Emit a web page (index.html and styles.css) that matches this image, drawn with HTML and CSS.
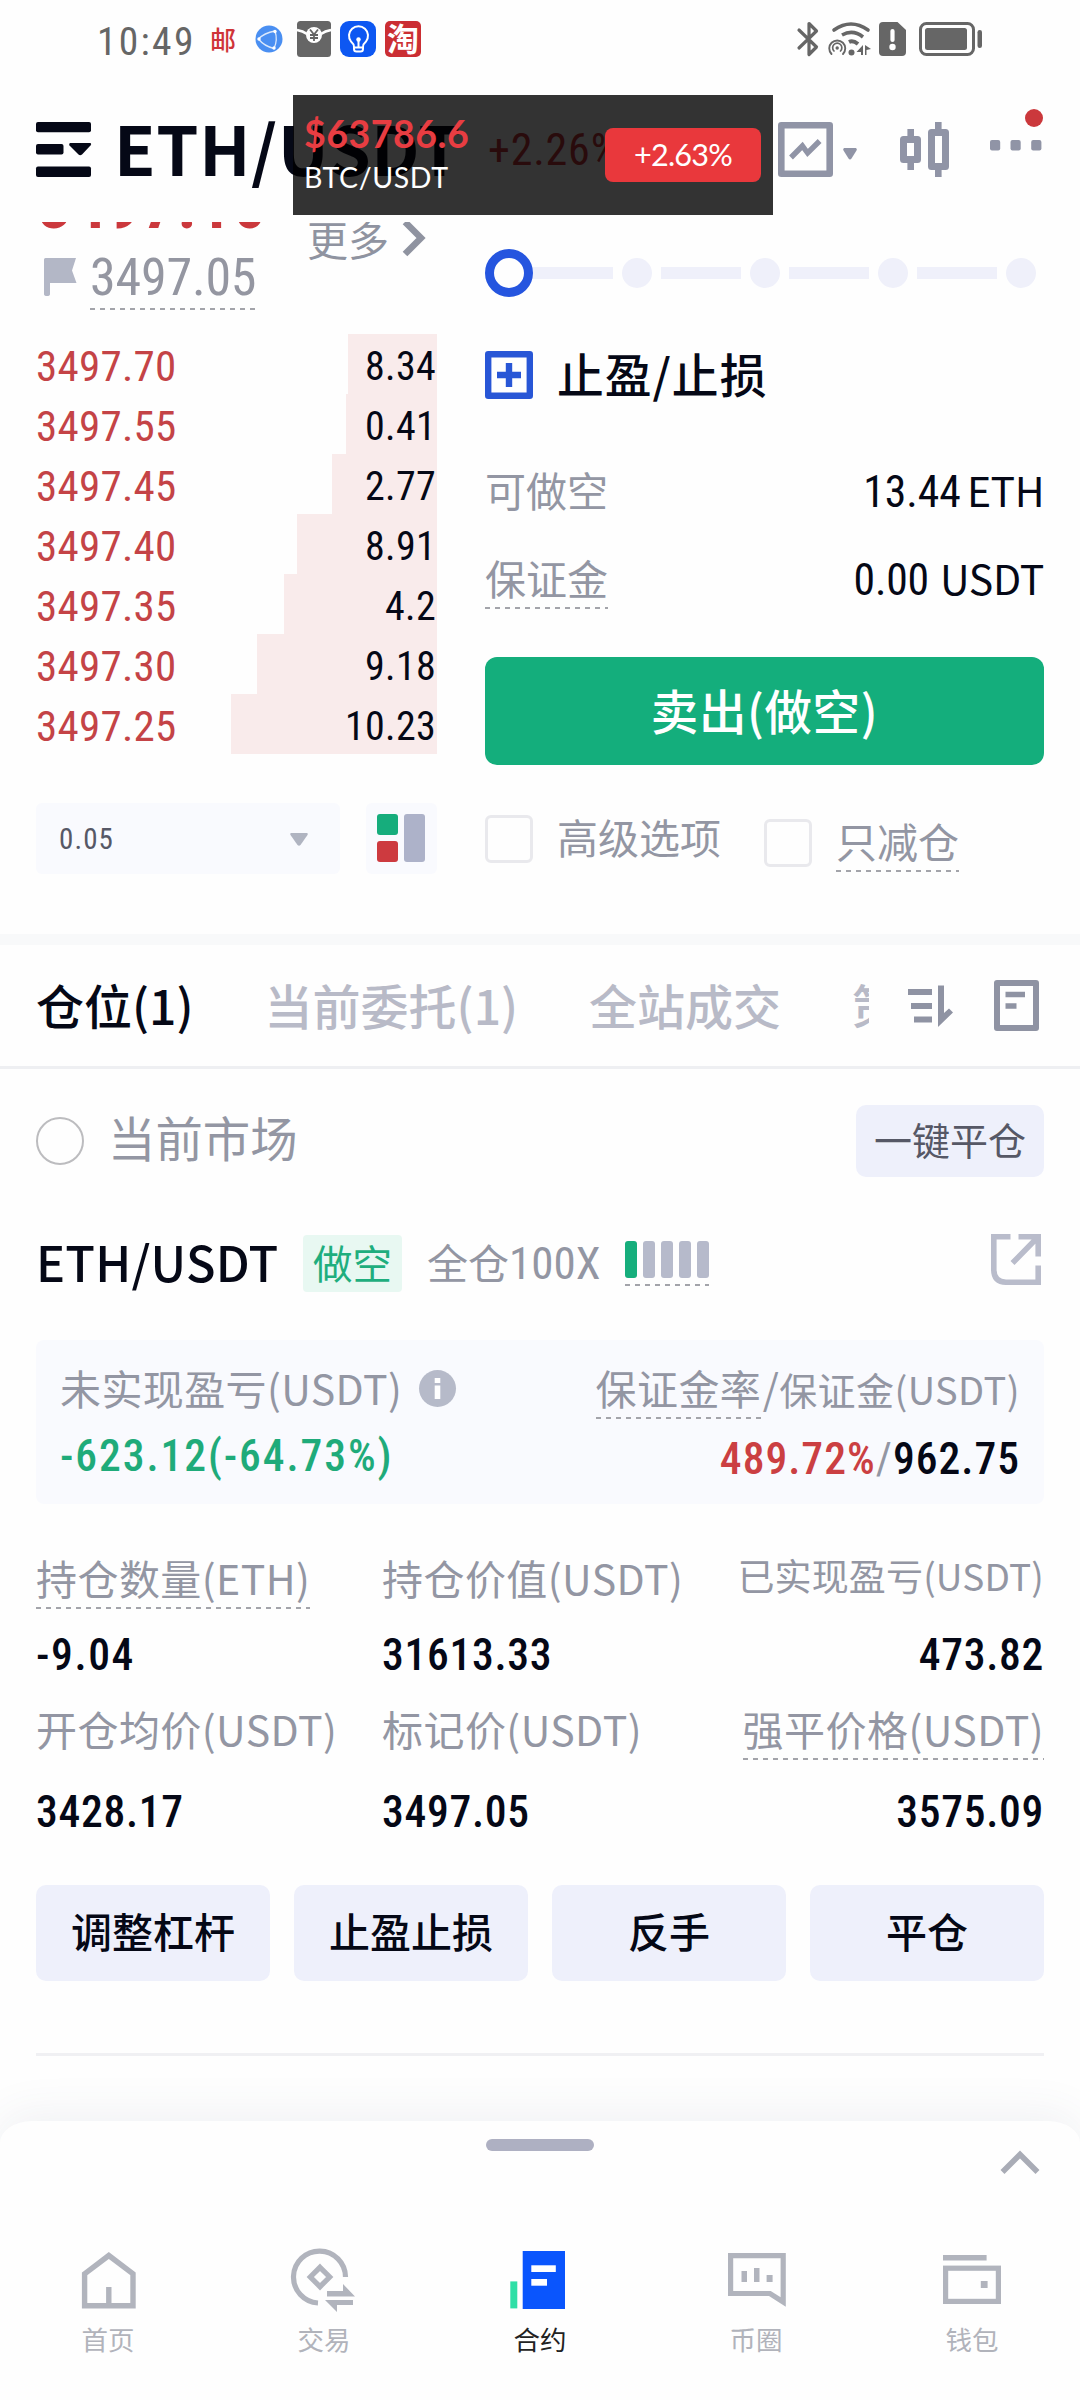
FILE: index.html
```
<!DOCTYPE html>
<html lang="zh-CN">
<head>
<meta charset="utf-8">
<title>ETH/USDT 合约</title>
<link rel="stylesheet" href="styles.css">
</head>
<body>
<div class="status">
  <span class="clock num">10:49</span>
  <span class="mail">邮</span>
  <svg class="globe" width="28" height="28" viewBox="0 0 28 28"><circle cx="14" cy="14" r="13.5" fill="#4a8ff2"/><g stroke="#fff" stroke-width="1.3" fill="none" opacity=".8"><path d="M20 6Q9 8 3.500 14Q9 21 19 23.500Q23 15 20 6"/></g><circle cx="4" cy="14" r="1.7" fill="#fff"/><circle cx="20" cy="6.500" r="1.7" fill="#fff"/><circle cx="19" cy="23" r="1.7" fill="#fff"/></svg>
  <svg class="envelope" width="34" height="36" viewBox="0 0 34 36"><rect width="34" height="36" rx="3.5" fill="#666"/><path d="M0 9Q6 10 10 13M34 9Q28 10 24 13" stroke="#fff" stroke-width="2.6" fill="none"/><circle cx="17" cy="14" r="8" fill="#fff"/><path d="M13 8.500L17 13.500L21 8.500M17 13.500V20M13 14H21M13 17H21" stroke="#666" stroke-width="1.8" fill="none"/></svg>
  <svg class="bulb" width="36" height="36" viewBox="0 0 36 36"><rect width="36" height="36" rx="9" fill="#0d57f2"/><path d="M14 26Q14 23 11 20.500A9.500 9.500 0 1 1 26 20.500Q23 23 23 26V28Q23 30.500 20.500 30.500H16.500Q14 30.500 14 28ZM14 26.500H23M18.500 26V19" fill="none" stroke="#fff" stroke-width="2"/><circle cx="18.500" cy="18.500" r="2.200" fill="#fff"/></svg>
  <span class="tao">淘</span>
  <span class="spacer"></span>
  <svg class="bluetooth" width="22" height="36" viewBox="0 0 22 36"><path d="M2 9L19.500 26L12 33.500V2.500L19.500 10L2 27" fill="none" stroke="#666" stroke-width="3.200" stroke-linejoin="round" stroke-linecap="round"/></svg>
  <svg class="wifi" width="43" height="34" viewBox="0 0 43 34"><g fill="none" stroke="#666" stroke-linecap="round"><path d="M6 8Q23-4 40 8" stroke-width="3.600"/><path d="M14 13Q25 7 35 15" stroke-width="3.600" stroke-linecap="butt"/><path d="M21 20Q25 18 30 22" stroke-width="4" stroke-linecap="butt"/><path d="M3.500 32A8 8 0 1 1 15 32" stroke-width="1.900"/><path d="M6 29A4.600 4.600 0 1 1 12.500 29" stroke-width="1.700"/></g><g fill="#666"><circle cx="9.200" cy="26" r="1.700"/><circle cx="23.500" cy="30.500" r="3"/><path d="M35 23V33H33V30H28.500ZM37 33V23L43 27L38.500 28V33Z"/></g></svg>
  <svg class="sim" width="27" height="34" viewBox="0 0 27 34"><path d="M4 0H18.500L27 8V30Q27 34 23 34H4Q0 34 0 30V4Q0 0 4 0Z" fill="#666"/><path d="M13.500 9V18" stroke="#fff" stroke-width="4.200" stroke-linecap="round"/><circle cx="13.500" cy="25" r="3.200" fill="#fff"/></svg>
  <svg class="battery" width="64" height="34" viewBox="0 0 64 34"><rect x="1.500" y="1.500" width="53" height="31" rx="6" fill="none" stroke="#666" stroke-width="3"/><rect x="6" y="6" width="42" height="22" rx="2.500" fill="#666"/><rect x="58.500" y="8" width="4.500" height="18" rx="2.200" fill="#666"/></svg>
</div>

<header class="header">
  <svg width="55" height="55" viewBox="0 0 55 55" fill="#050816"><rect width="55" height="10.300" rx="2"/><rect y="22" width="27.500" height="10.500" rx="2"/><rect y="44.500" width="55" height="10.500" rx="2"/><path d="M34 21H54Q56 21.500 54.500 23.500L46 32.500Q44 34 42.500 32.500L33.500 23.500Q32.500 21.500 34 21Z"/></svg>
  <h1 class="pair">ETH/USDT</h1>
  <span class="change num">+2.26%</span>
  <span class="spacer"></span>
  <svg width="55" height="55" viewBox="0 0 55 55"><rect x="3.300" y="3.300" width="48.400" height="48.400" fill="none" stroke="#9094a6" stroke-width="6.600" stroke-linejoin="round"/><path d="M13 35.500L24.400 24L29.600 31L41.600 19" fill="none" stroke="#9094a6" stroke-width="5.400"/></svg>
  <svg class="caret" width="14" height="12" viewBox="0 0 14 12"><path d="M1 0H13Q14.500 1 13.500 2.500L8.500 10.500Q7 12.500 5.500 10.500L.5 2.500Q-.5 1 1 0Z" fill="#9094a6"/></svg>
  <svg class="candles" width="49" height="55" viewBox="0 0 49 55"><g fill="none" stroke="#9094a6" stroke-width="7" stroke-linejoin="round"><rect x="3.500" y="17.500" width="14" height="20"/><path d="M10.700 7V16M10.700 38V48M38.300 0V9M38.300 46V55" stroke-width="6.600"/><rect x="31.500" y="10.500" width="14" height="34"/></g></svg>
  <svg class="more" width="52" height="55" viewBox="0 0 52 55"><g fill="#9094a6"><rect y="18" width="10.200" height="10.400" rx="2"/><rect x="20.500" y="18" width="10.200" height="10.400" rx="2"/><rect x="41.200" y="18" width="10.200" height="10.400" rx="2"/></g><circle cx="44" cy="-4" r="9" fill="#cb383c"/></svg>
</header>

<aside class="ticker">
  <div class="ticker-text"><b class="ticker-price">$63786.6</b><span class="ticker-pair">BTC/USDT</span></div>
  <span class="ticker-badge">+2.63%</span>
</aside>

<section class="trade">
  <div class="book">
    <div class="book-top">
      <div>
        <div class="last num">3497.10</div>
        <div class="mark"><svg width="33" height="38" viewBox="0 0 33 38"><path d="M0 1.500Q0 0 1.500 0H32L28 12.500L32.500 25H6V36Q6 38 3 38Q0 38 0 36Z" fill="#b3b7c6"/></svg><span class="mark-price num dash">3497.05</span></div>
      </div>
      <div class="book-more">更多<svg width="24" height="34" viewBox="0 0 24 34"><path d="M3 1L19 17L3 33" fill="none" stroke="#8f93a0" stroke-width="6.500"/></svg></div>
    </div>
    <div class="asks num">
      <div class="ask" style="--depth:89px"><span>3497.70</span><span class="amount">8.34</span></div>
      <div class="ask" style="--depth:91px"><span>3497.55</span><span class="amount">0.41</span></div>
      <div class="ask" style="--depth:105px"><span>3497.45</span><span class="amount">2.77</span></div>
      <div class="ask" style="--depth:140px"><span>3497.40</span><span class="amount">8.91</span></div>
      <div class="ask" style="--depth:153px"><span>3497.35</span><span class="amount">4.2</span></div>
      <div class="ask" style="--depth:180px"><span>3497.30</span><span class="amount">9.18</span></div>
      <div class="ask" style="--depth:206px"><span>3497.25</span><span class="amount">10.23</span></div>
    </div>
    <div class="book-tools">
      <div class="step num">0.05<svg width="18" height="13" viewBox="0 0 18 13"><path d="M1 0H17Q18.500 .5 17.500 2L10.500 12Q9 13.500 7.500 12L.5 2Q-.5 .5 1 0Z" fill="#b0b4c1"/></svg></div>
      <div class="layout-btn"><svg width="48" height="48" viewBox="0 0 48 48"><rect width="21" height="21" rx="3" fill="#16ad7c"/><rect y="27" width="21" height="21" rx="3" fill="#cd3a3f"/><rect x="27" width="21" height="48" rx="3" fill="#adb2c9"/></svg></div>
    </div>
  </div>

  <div class="order">
    <div class="slider"><i class="knob"></i><i class="bar"></i><i class="dot"></i><i class="bar"></i><i class="dot"></i><i class="bar"></i><i class="dot"></i><i class="bar"></i><i class="dot"></i></div>
    <div class="tpsl"><svg width="48" height="48" viewBox="0 0 48 48"><path d="M3.200 3.200H44.800V44.800H3.200ZM12 24H36M24 12V36" fill="none" stroke="#2856d6" stroke-width="6.400" stroke-linejoin="round"/></svg>止盈/止损</div>
    <div class="kv"><span>可做空</span><span class="kv-value"><span class="num near">13.44</span><span class="eth">ETH</span></span></div>
    <div class="kv kv-2"><span class="dash">保证金</span><span class="kv-value"><span class="num zero">0.00</span><span class="usdt">USDT</span></span></div>
    <div class="sell">卖出(做空)</div>
    <div class="checks">
      <label class="check"><i class="box"></i><span>高级选项</span></label>
      <label class="check low"><i class="box"></i><span class="dash">只减仓</span></label>
    </div>
  </div>
</section>

<nav class="tabs">
  <div class="tab-list"><span class="tab active">仓位(1)</span><span class="tab">当前委托(1)</span><span class="tab">全站成交</span><span class="tab">策略委托</span></div>
  <svg class="sort" width="45" height="44" viewBox="0 0 45 44" fill="#8f93a3"><rect y="5" width="24" height="6"/><rect x="3" y="19" width="21" height="6"/><rect x="6" y="32.500" width="18" height="6"/><path d="M30 1.500H36V29L41 24.500L45 28.500L30 43Z"/></svg>
  <svg class="note" width="45" height="51" viewBox="0 0 45 51"><rect x="3" y="3" width="39" height="45" fill="none" stroke="#8f93a3" stroke-width="6" stroke-linejoin="round"/><path d="M11.500 14.500H31M11.500 26H22.500" stroke="#8f93a3" stroke-width="5.400"/></svg>
</nav>

<main class="positions">
  <div class="filter"><i class="radio"></i><span class="filter-label">当前市场</span><span class="close-all">一键平仓</span></div>

  <div class="pos-head">
    <b class="pos-name">ETH/USDT</b><span class="tag">做空</span><span class="mode">全仓<span class="num">100X</span></span>
    <span class="risk dash"><i class="on"></i><i></i><i></i><i></i><i></i></span>
    <svg class="share" width="50" height="51" viewBox="0 0 50 51" fill="none" stroke="#b9bccb" stroke-width="5.600"><path d="M19.500 2.800H2.800V36Q3 48 15 48.200H47.200V31.500M27.500 2.800H47.200V22.500M47 3L21.500 29"/></svg>
  </div>

  <div class="card">
    <div>
      <div class="card-label">未实现盈亏(USDT)<svg width="37" height="37" viewBox="0 0 37 37"><circle cx="18.500" cy="18.500" r="18.500" fill="#b6bac9"/><path d="M18.500 8V13M18.500 15.500V29" stroke="#fff" stroke-width="5.600"/></svg></div>
      <div class="card-value num green">-623.12(-64.73%)</div>
    </div>
    <div class="right">
      <div class="card-label"><span class="dash">保证金率</span><span class="slash">/</span><span class="small">保证金(USDT)</span></div>
      <div class="card-value low num"><span class="red">489.72%</span><span class="grey">/</span>962.75</div>
    </div>
  </div>

  <div class="stats">
    <div><span class="stat-label dash">持仓数量(ETH)</span><span class="stat-value signed num">-9.04</span></div>
    <div><span class="stat-label">持仓价值(USDT)</span><span class="stat-value num">31613.33</span></div>
    <div class="right"><span class="stat-label compact">已实现盈亏(USDT)</span><span class="stat-value num">473.82</span></div>
  </div>
  <div class="stats stats-2">
    <div><span class="stat-label">开仓均价(USDT)</span><span class="stat-value num">3428.17</span></div>
    <div><span class="stat-label">标记价(USDT)</span><span class="stat-value num">3497.05</span></div>
    <div class="right"><span class="stat-label dash">强平价格(USDT)</span><span class="stat-value num">3575.09</span></div>
  </div>

  <div class="actions"><span>调整杠杆</span><span>止盈止损</span><span>反手</span><span>平仓</span></div>
</main>

<footer class="sheet">
  <div class="handle"></div>
  <svg class="up" width="40" height="25" viewBox="0 0 40 25"><path d="M2.500 22L20 4.500L37.500 22" fill="none" stroke="#a9acb6" stroke-width="5.600"/></svg>
  <div class="nav">
    <div class="nav-item"><svg width="70" height="70" viewBox="0 0 70 70" fill="none" stroke="#b1b4bd" stroke-width="5.400"><path d="M11.600 28.800L35.800 10.500L60 28.800V60.800H11.600ZM35.800 42V61"/></svg>首页</div>
    <div class="nav-item"><svg width="70" height="70" viewBox="0 0 70 70"><path d="M56.500 32A26 26 0 1 0 29 58M31 22.300L40.700 32L31 41.700L21.300 32Z" fill="none" stroke="#b1b4bd" stroke-width="5.200"/><path d="M38 46H54V39L66 51.500H38ZM36 55H64V60H48V67Z" fill="#b1b4bd"/></svg>交易</div>
    <div class="nav-item current"><svg width="70" height="70" viewBox="0 0 70 70"><rect x="5.300" y="36.400" width="7" height="27" fill="#2fdfa6"/><rect x="17.700" y="6" width="42.300" height="58" fill="#0a55fd"/><rect x="26.300" y="20.300" width="24.500" height="6.700" fill="#fff"/><rect x="26.300" y="34" width="15.700" height="6.700" fill="#fff"/></svg>合约</div>
    <div class="nav-item"><svg width="70" height="70" viewBox="0 0 70 70"><path d="M9.600 10.600H62.200V57L49 48.500H9.600Z" fill="none" stroke="#b1b4bd" stroke-width="5.200"/><path d="M20.500 26H26V37H20.500ZM33 23H38.500V37H33ZM45.600 30H51.600V37H45.600Z" fill="#b1b4bd"/></svg>币圈</div>
    <div class="nav-item"><svg width="70" height="70" viewBox="0 0 70 70"><rect x="8.600" y="23.200" width="52.800" height="33.200" fill="none" stroke="#b1b4bd" stroke-width="5.200"/><path d="M6 10H49.600V15.400H6ZM43.800 36H50.600V43H43.800Z" fill="#b1b4bd"/></svg>钱包</div>
  </div>
</footer>
</body>
</html>
```
FILE: styles.css
```
* { box-sizing: border-box; }

body {
  margin: 0;
  width: 1080px;
  height: 2400px;
  overflow: hidden;
  position: relative;
  background: #fefefe;
  color: #050816;
  font-family: "Noto Sans CJK SC", sans-serif;
  font-size: 41px;
}

svg { display: block; flex: none; overflow: visible; }
i { display: block; flex: none; }
.num { font-family: "Roboto Condensed", Roboto, sans-serif; }
.spacer { flex: 1; }
.right { text-align: right; }
.green { color: #1fab7a; }
.red { color: #cb3f42; }
.grey { color: #9396a3; font-weight: 400; }

.dash {
  padding-bottom: 2px;
  background: repeating-linear-gradient(90deg, #a3a4aa 0 5px, transparent 5px 10px) left bottom / 100% 2px no-repeat;
}

/* status bar */
.status { display: flex; align-items: center; height: 78px; padding: 0 97px 0 97px; color: #666; }
.clock { width: 113px; margin-top: 5px; font-size: 39.5px; line-height: 60px; letter-spacing: 2.3px; }
.mail { width: 26px; font-size: 26px; line-height: 36px; font-weight: 500; color: #cf3438; }
.globe { margin-left: 19px; }
.envelope { margin-left: 14px; }
.bulb { margin-left: 9px; }
.tao { width: 36px; height: 36px; margin-left: 9px; border-radius: 5px; background: #cb2e33; color: #fff; font-size: 32px; line-height: 33px; font-weight: 700; text-align: center; }
.wifi { margin-left: 9px; }
.sim { margin-left: 8px; }
.battery { margin-left: 13px; }

/* header */
.header { display: flex; align-items: center; height: 144px; padding: 0 38px 1px 36px; }
.pair { width: 395px; margin: -6px 0 0; padding-left: 23px; font-size: 67.6px; line-height: 100px; font-weight: 700; letter-spacing: .7px; }
.change { padding-left: 2px; font-size: 44px; line-height: 60px; letter-spacing: .8px; color: #cb383c; }
.caret { margin: 8px 0 0 10px; }
.candles { margin-left: 43px; }
.more { margin-left: 41px; }

/* floating ticker */
.ticker { position: absolute; left: 293px; top: 95px; width: 480px; height: 120px; display: flex; justify-content: space-between; padding: 17px 12px 0 11px; background: rgba(0, 0, 0, .8); font-family: Lato, sans-serif; }
.ticker-text { display: flex; flex-direction: column; }
.ticker-price { font-size: 37.5px; line-height: 44px; letter-spacing: .5px; color: #e83d42; }
.ticker-pair { font-size: 28.5px; line-height: 42px; letter-spacing: .6px; color: #fff; }
.ticker-badge { width: 156px; height: 54px; margin-top: 16px; border-radius: 8px; background: #e9383c; color: #fff; font-size: 30.6px; line-height: 54px; letter-spacing: -.8px; text-align: center; }

/* order book and order form */
.trade { display: flex; justify-content: space-between; height: 712px; padding: 0 36px; overflow: hidden; }
.book { width: 401px; }
.book-top { display: flex; height: 112px; }
.book-top > div:first-child { width: 271px; }
.last { margin-top: -49px; font-size: 66px; line-height: 66px; font-weight: 700; letter-spacing: 1.5px; color: #cb383c; padding-left: 2px; }
.mark { display: flex; align-items: flex-start; margin-top: 7px; padding-left: 8px; }
.mark svg { margin: 12px 13px 0 0; }
.mark-price { font-size: 52px; line-height: 63px; height: 64px; letter-spacing: -.2px; color: #9496a1; }
.book-more { display: flex; font-size: 41px; line-height: 40px; margin-top: -4px; color: #8f93a0; white-space: nowrap; }
.book-more svg { margin: 3px 0 0 13px; }
.ask { display: flex; justify-content: space-between; height: 60px; font-size: 43px; line-height: 65px; letter-spacing: .25px; color: #c44346; background: linear-gradient(#f9ebeb, #f9ebeb) right top / var(--depth) 100% no-repeat; }
.amount { padding-right: 1px; font-size: 40px; line-height: 66px; letter-spacing: .3px; color: #050816; }
.book-tools { display: flex; justify-content: space-between; margin-top: 49px; }
.step { display: flex; justify-content: space-between; align-items: center; width: 304px; height: 71px; padding: 1px 32px 0 23px; border-radius: 6px; background: #f9fafe; color: #565866; font-size: 29px; letter-spacing: 1.1px; }
.layout-btn { display: grid; place-items: center; width: 71px; height: 71px; padding: 0 1px 1px 0; border-radius: 6px; background: #f9fafe; }

.order { width: 559px; }
.slider { display: flex; align-items: center; height: 48px; margin-top: 27px; }
.knob { width: 48px; height: 48px; border: 9px solid #2555df; border-radius: 50%; }
.bar { width: 80px; height: 12px; background: #eff0fa; }
.dot { width: 30px; height: 30px; margin: 0 9px; border-radius: 50%; background: #eff0fa; }
.tpsl { display: flex; gap: 24px; height: 48px; margin-top: 54px; font-size: 46.8px; line-height: 44px; font-weight: 500; letter-spacing: 1px; }
.tpsl svg { letter-spacing: 0; }
.kv { display: flex; justify-content: space-between; align-items: baseline; height: 60px; margin-top: 60px; line-height: 60px; color: #9396a3; }
.kv-2 { margin-top: 28px; }
.kv-value { color: #050816; }
.kv-value .num { font-size: 43.7px; }
.near { letter-spacing: 0; margin-right: 6px; }
.zero { letter-spacing: -.2px; margin-right: 11px; }
.eth { letter-spacing: -.5px; }
.usdt { letter-spacing: -.3px; }
.sell { height: 108px; margin-top: 50px; border-radius: 12px; background: #14ae7c; color: #fff; font-size: 47.5px; line-height: 105px; font-weight: 500; letter-spacing: .6px; text-align: center; }
.checks { display: flex; margin-top: 41px; line-height: 60px; color: #9396a3; }
.check { display: flex; align-items: flex-start; gap: 24px; }
.box { width: 48px; height: 48px; margin-top: 9px; border: 3px solid #e9e9ed; border-radius: 6px; }
.check.low { margin: 4px 0 0 43px; }

/* position tabs */
.tabs { display: flex; align-items: center; height: 135px; padding: 0 41px 0 36px; border-top: 11px solid #f8f9fa; border-bottom: 3px solid #eeeff2; }
.tab-list { display: flex; gap: 71px; width: 833px; overflow: hidden; white-space: nowrap; }
.tab { font-size: 48px; line-height: 112px; padding-bottom: 4px; font-weight: 500; color: #b8bac7; }
.tab.active { color: #050816; }
.sort { margin-left: 39px; }
.note { margin-left: auto; }

/* position details */
.positions { padding: 0 36px; }
.filter { display: flex; align-items: center; height: 72px; margin-top: 36px; }
.radio { width: 48px; height: 48px; border: 2.5px solid #bcbcbf; border-radius: 50%; }
.filter-label { margin-left: 24px; font-size: 47.4px; line-height: 64px; padding-bottom: 8px; color: #9396a3; }
.close-all { width: 188px; height: 72px; margin-left: auto; border-radius: 10px; background: #eef0fb; color: #565866; font-size: 38px; line-height: 67px; text-align: center; }

.pos-head { display: flex; height: 57px; margin-top: 55px; line-height: 58px; color: #9396a3; }
.pos-name { width: 267px; font-size: 48.6px; font-weight: 500; letter-spacing: .2px; color: #050816; }
.tag { width: 99px; height: 57px; margin-top: 3px; border-radius: 4px; background: #e8f8f2; color: #1fae7e; font-size: 39.5px; line-height: 54px; text-align: center; }
.mode { width: 198px; margin-left: 25px; line-height: 59px; }
.mode .num { font-size: 45px; letter-spacing: 0; }
.risk { display: flex; gap: 6px; height: 45px; margin-top: 9px; }
.risk i { width: 12px; height: 37px; border-radius: 3px; background: #b6bacb; }
.risk .on { background: #16ae7c; }
.share { margin: 2px 3px 0 auto; }

.card { display: flex; justify-content: space-between; height: 164px; margin-top: 51px; padding: 17px 24px 0 24px; border-radius: 8px; background: #f9fafe; }
.card-label { display: flex; align-items: baseline; height: 60px; line-height: 60px; letter-spacing: .4px; color: #9396a3; }
.card-label svg { align-self: flex-start; margin: 13px 0 0 17px; }
.slash { width: 18px; }
.small { font-size: 38px; }
.card-value { margin-top: 9px; font-size: 43.6px; line-height: 61px; font-weight: 500; letter-spacing: 1.9px; }
.card-value.low { margin-top: 12px; letter-spacing: 1px; }

.stats { display: grid; grid-template-columns: 346px 346px 1fr; margin-top: 43px; }
.stats > div { display: flex; flex-direction: column; align-items: flex-start; }
.stats > .right { align-items: flex-end; }
.stat-label { height: 62px; line-height: 60px; letter-spacing: .45px; color: #9396a3; white-space: nowrap; }
.stat-label.compact { font-size: 37px; line-height: 57px; letter-spacing: .15px; }
.stat-value { margin-top: 17px; font-size: 43.6px; line-height: 60px; font-weight: 500; letter-spacing: .7px; }
.stat-value.signed { letter-spacing: 1.6px; }
.stats-2 { margin-top: 12px; }
.stats-2 .stat-value { margin-top: 23px; }

.actions { display: grid; grid-template-columns: repeat(4, 1fr); gap: 24px; margin-top: 42px; padding-bottom: 72px; border-bottom: 3px solid #f0f0f3; text-align: center; }
.actions span { height: 96px; border-radius: 10px; background: #eef0fb; line-height: 91px; font-weight: 500; }

/* bottom sheet with navigation */
.sheet { display: flex; flex-direction: column; align-items: center; height: 279px; margin-top: 65px; border-radius: 32px 32px 0 0 / 22px 22px 0 0; background: #fefefe; box-shadow: 0 -6px 46px rgba(60, 80, 120, .08); }
.handle { width: 108px; height: 12px; margin-top: 18px; border-radius: 6px; background: #aeb0c2; }
.up { align-self: flex-end; margin: -1px 40px 0 0; }
.nav { display: grid; grid-template-columns: repeat(5, 216px); margin-top: 70px; }
.nav-item { display: flex; flex-direction: column; align-items: center; gap: 4px; font-size: 26.500px; line-height: 40px; color: #b1b3bb; }
.nav-item.current { color: #222; }
```
